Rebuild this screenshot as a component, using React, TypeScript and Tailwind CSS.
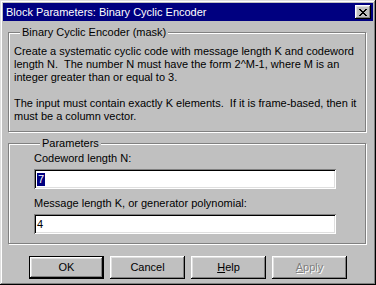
const FONT = "font-['Liberation_Sans',Arial,sans-serif]";

function Button({
  children,
  primary,
  disabled,
}: {
  children: React.ReactNode;
  primary?: boolean;
  disabled?: boolean;
}) {
  return (
    <button
      type="button"
      className={`flex h-[23px] w-[75px] items-center justify-center bg-[#c0c0c0] text-[11px] ${
        primary
          ? "border border-black shadow-[inset_-1px_-1px_0_#000,inset_1px_1px_0_#fff,inset_-2px_-2px_0_#808080,inset_2px_2px_0_#dfdfdf]"
          : "shadow-[inset_-1px_-1px_0_#000,inset_1px_1px_0_#fff,inset_-2px_-2px_0_#808080,inset_2px_2px_0_#dfdfdf]"
      } ${disabled ? "text-[#808080] [text-shadow:1px_1px_0_#fff]" : "text-black"}`}
    >
      {children}
    </button>
  );
}

function Field({ label, value, selected }: { label: string; value: string; selected?: boolean }) {
  return (
    <div className="flex flex-col">
      <span className="leading-[13px]">{label}</span>
      <div className="mt-[4px] flex h-[20px] w-[302px] items-center bg-white pl-[3px] shadow-[inset_1px_1px_0_#808080,inset_-1px_-1px_0_#fff,inset_2px_2px_0_#000,inset_-2px_-2px_0_#dfdfdf]">
        <span className={selected ? "bg-[#000080] px-[1px] leading-[13px] text-white" : "leading-[13px]"}>
          {value}
        </span>
      </div>
    </div>
  );
}

export default function App() {
  return (
    <div
      className={`flex h-[285px] w-[376px] flex-col bg-[#c0c0c0] p-[3px] text-[11px] text-black ${FONT} shadow-[inset_-1px_-1px_0_#000,inset_1px_1px_0_#dfdfdf,inset_-2px_-2px_0_#808080,inset_2px_2px_0_#fff]`}
    >
      <div className="flex h-[18px] items-center justify-between bg-[#000080] pl-[3px] pr-[2px] text-[11px] text-white">
        <span>Block Parameters: Binary Cyclic Encoder</span>
        <button
          type="button"
          className="flex h-[14px] w-[16px] items-center justify-center bg-[#c0c0c0] shadow-[inset_-1px_-1px_0_#000,inset_1px_1px_0_#fff,inset_-2px_-2px_0_#808080,inset_2px_2px_0_#dfdfdf]"
          aria-label="Close"
        >
          <svg width="8" height="7" viewBox="0 0 8 7" shapeRendering="crispEdges">
            <path d="M0 0h2v1h1v1h2v-1h1v-1h2v1h-1v1h-1v1h-1v1h1v1h1v1h1v1h-2v-1h-1v-1h-2v1h-1v1h-2v-1h1v-1h1v-1h1v-1h-1v-1h-1v-1h-1z" fill="#000" />
          </svg>
        </button>
      </div>

      <fieldset className="ml-[5px] mt-[5px] w-[358px] border border-[#808080] px-[5px] pb-[8px] pt-[6px] shadow-[1px_1px_0_#fff,inset_1px_1px_0_#fff]">
        <legend className="ml-[6px] bg-[#c0c0c0] px-[2px] leading-[13px]">Binary Cyclic Encoder (mask)</legend>
        <p className="leading-[13px]">
          Create a systematic cyclic code with message length K and codeword length N.&nbsp; The number N must
          have the form 2^M-1, where M is an integer greater than or equal to 3.
        </p>
        <p className="mt-[13px] leading-[13px]">
          The input must contain exactly K elements.&nbsp; If it is frame-based, then it must be a column vector.
        </p>
      </fieldset>

      <fieldset className="ml-[5px] mt-[5px] w-[358px] border border-[#808080] pb-[9px] pl-[25px] pt-[2px] shadow-[1px_1px_0_#fff,inset_1px_1px_0_#fff]">
        <legend className="ml-[6px] bg-[#c0c0c0] px-[2px] leading-[13px]">Parameters</legend>
        <div className="flex flex-col gap-[8px]">
          <Field label="Codeword length N:" value="7" selected />
          <Field label="Message length K, or generator polynomial:" value="4" />
        </div>
      </fieldset>

      <div className="mt-[12px] flex justify-center gap-[6px]">
        <Button primary>OK</Button>
        <Button>Cancel</Button>
        <Button>
          <span>
            <span className="underline">H</span>elp
          </span>
        </Button>
        <Button disabled>
          <span>
            <span className="underline">A</span>pply
          </span>
        </Button>
      </div>
    </div>
  );
}
